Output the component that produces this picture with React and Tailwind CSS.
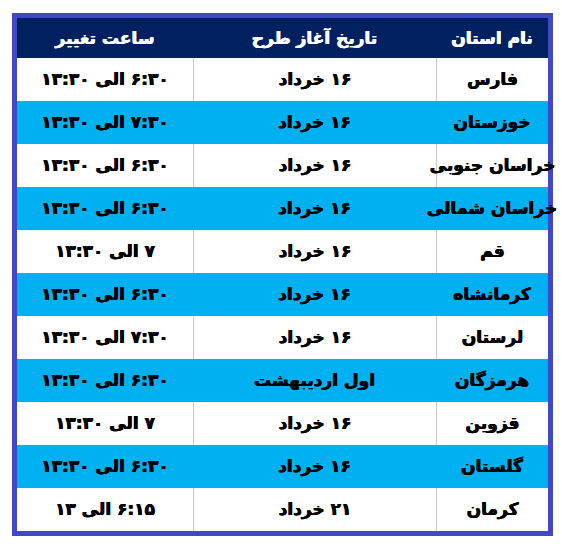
import React from "react";

const rows = [
  ["فارس", "۱۶ خرداد", "۶:۳۰ الی ۱۳:۳۰"],
  ["خوزستان", "۱۶ خرداد", "۷:۳۰ الی ۱۳:۳۰"],
  ["خراسان جنوبی", "۱۶ خرداد", "۶:۳۰ الی ۱۳:۳۰"],
  ["خراسان شمالی", "۱۶ خرداد", "۶:۳۰ الی ۱۳:۳۰"],
  ["قم", "۱۶ خرداد", "۷ الی ۱۳:۳۰"],
  ["کرمانشاه", "۱۶ خرداد", "۶:۳۰ الی ۱۳:۳۰"],
  ["لرستان", "۱۶ خرداد", "۷:۳۰ الی ۱۳:۳۰"],
  ["هرمزگان", "اول اردیبهشت", "۶:۳۰ الی ۱۳:۳۰"],
  ["قزوین", "۱۶ خرداد", "۷ الی ۱۳:۳۰"],
  ["گلستان", "۱۶ خرداد", "۶:۳۰ الی ۱۳:۳۰"],
  ["کرمان", "۲۱ خرداد", "۶:۱۵ الی ۱۳"],
];

export default function App() {
  return (
    <div className="w-[562px] h-[550px] bg-white pt-[13px] pl-[12px]" style={{ fontFamily: '"DejaVu Sans", sans-serif' }}>
      <div dir="rtl" className="w-[541px] border-[5px] border-[#4048c8] font-bold text-[17px] leading-none [text-shadow:0.4px_0_0_currentColor,-0.4px_0_0_currentColor]">
        <div className="grid grid-cols-[112px_243px_176px] h-[40px] bg-[#002060] text-white">
          <div className="flex items-center justify-center whitespace-nowrap">نام استان</div>
          <div className="flex items-center justify-center whitespace-nowrap">تاریخ آغاز طرح</div>
          <div className="flex items-center justify-center whitespace-nowrap">ساعت تغییر</div>
        </div>
        {rows.map((r, i) => {
          const cyan = i % 2 === 1;
          return (
            <div
              key={i}
              className={
                "grid grid-cols-[112px_243px_176px] h-[43px] text-black " +
                (cyan ? "bg-[#00b0f0]" : "bg-white")
              }
            >
              <div className={"flex items-center justify-center whitespace-nowrap " + (cyan ? "" : "border-l border-[#c8c8c8]")}>
                {r[0]}
              </div>
              <div className={"flex items-center justify-center whitespace-nowrap " + (cyan ? "" : "border-l border-[#c8c8c8]")}>
                {r[1]}
              </div>
              <div className="flex items-center justify-center whitespace-nowrap">{r[2]}</div>
            </div>
          );
        })}
      </div>
    </div>
  );
}
